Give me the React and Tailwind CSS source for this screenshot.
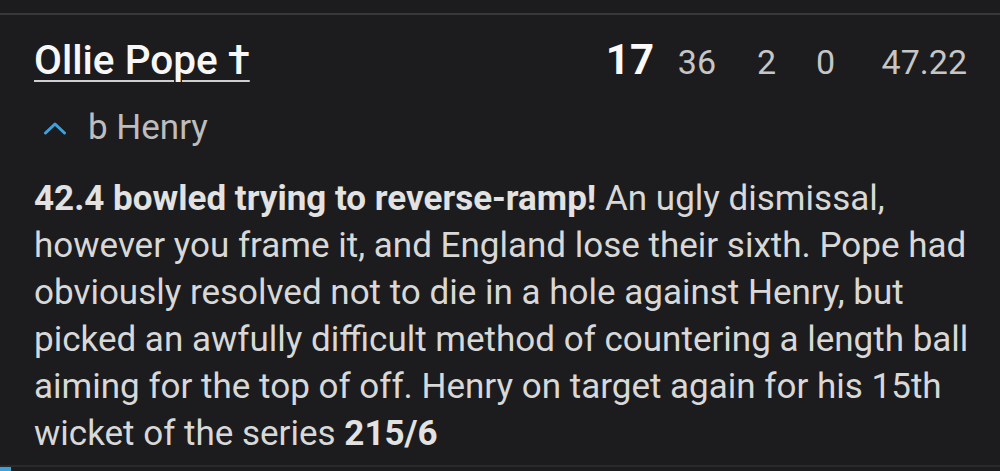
import React from "react";

const ChevronUp = () => (
  <svg width="24" height="14" viewBox="0 0 24 14" fill="none" className="shrink-0">
    <path d="M2.5 12L12 3L21.5 12" stroke="#3da2dc" strokeWidth="3" strokeLinecap="round" strokeLinejoin="round" />
  </svg>
);

const App = () => {
  const stats = [
    { value: "36", w: "w-[62px]" },
    { value: "2", w: "w-[60px]" },
    { value: "0", w: "w-[59px]" },
    { value: "47.22", w: "w-[132px]" },
  ];

  // line breaks follow the app's own wrapping
  const lines = [
    "however you frame it, and England lose their sixth. Pope had",
    "obviously resolved not to die in a hole against Henry, but",
    "picked an awfully difficult method of countering a length ball",
    "aiming for the top of off. Henry on target again for his 15th",
  ];

  return (
    <div className="w-[1000px] h-[471px] bg-[#1c1c1e] overflow-hidden flex flex-col" style={{ fontFamily: "Roboto, 'Noto Sans', sans-serif" }}>
      <div className="h-[13px]" />
      <div className="h-[2px] bg-[#38383b]" />

      {/* batter row */}
      <div className="flex items-baseline justify-between pl-[34px] pr-[33px] pt-[24px]">
        <a className="text-[40.5px] leading-none font-medium text-[#f7f7f7] underline decoration-[#cfcfcf] decoration-2 underline-offset-[6px]">
          Ollie Pope †
        </a>
        <div className="flex items-baseline text-[34px] leading-none text-[#c6c6c6]">
          <span className="text-[42px] font-bold text-[#fafafa]">17</span>
          {stats.map((s) => (
            <span key={s.value} className={`${s.w} text-right`}>
              {s.value}
            </span>
          ))}
        </div>
      </div>

      {/* dismissal */}
      <div className="flex items-center gap-[21px] pl-[43px] mt-[29px] text-[35px] leading-none text-[#bdbdbd]">
        <ChevronUp />
        <span>b Henry</span>
      </div>

      {/* commentary */}
      <div className="pl-[34px] mt-[30px] text-[35px] leading-[47px] text-[#d8d8d8] whitespace-nowrap">
        <div>
          <b className="font-bold text-[#e2e2e2]">42.4 bowled trying to reverse-ramp!</b> An ugly dismissal,
        </div>
        {lines.map((l) => (
          <div key={l}>{l}</div>
        ))}
        <div>
          wicket of the series <b className="font-bold text-[#e2e2e2]">215/6</b>
        </div>
      </div>

      <div className="mt-auto h-[2px] bg-[#2a2a2d]" />
      <div className="h-[4px] flex">
        <div className="w-[11px] bg-[#3da2dc]" />
      </div>
    </div>
  );
};

export default App;
